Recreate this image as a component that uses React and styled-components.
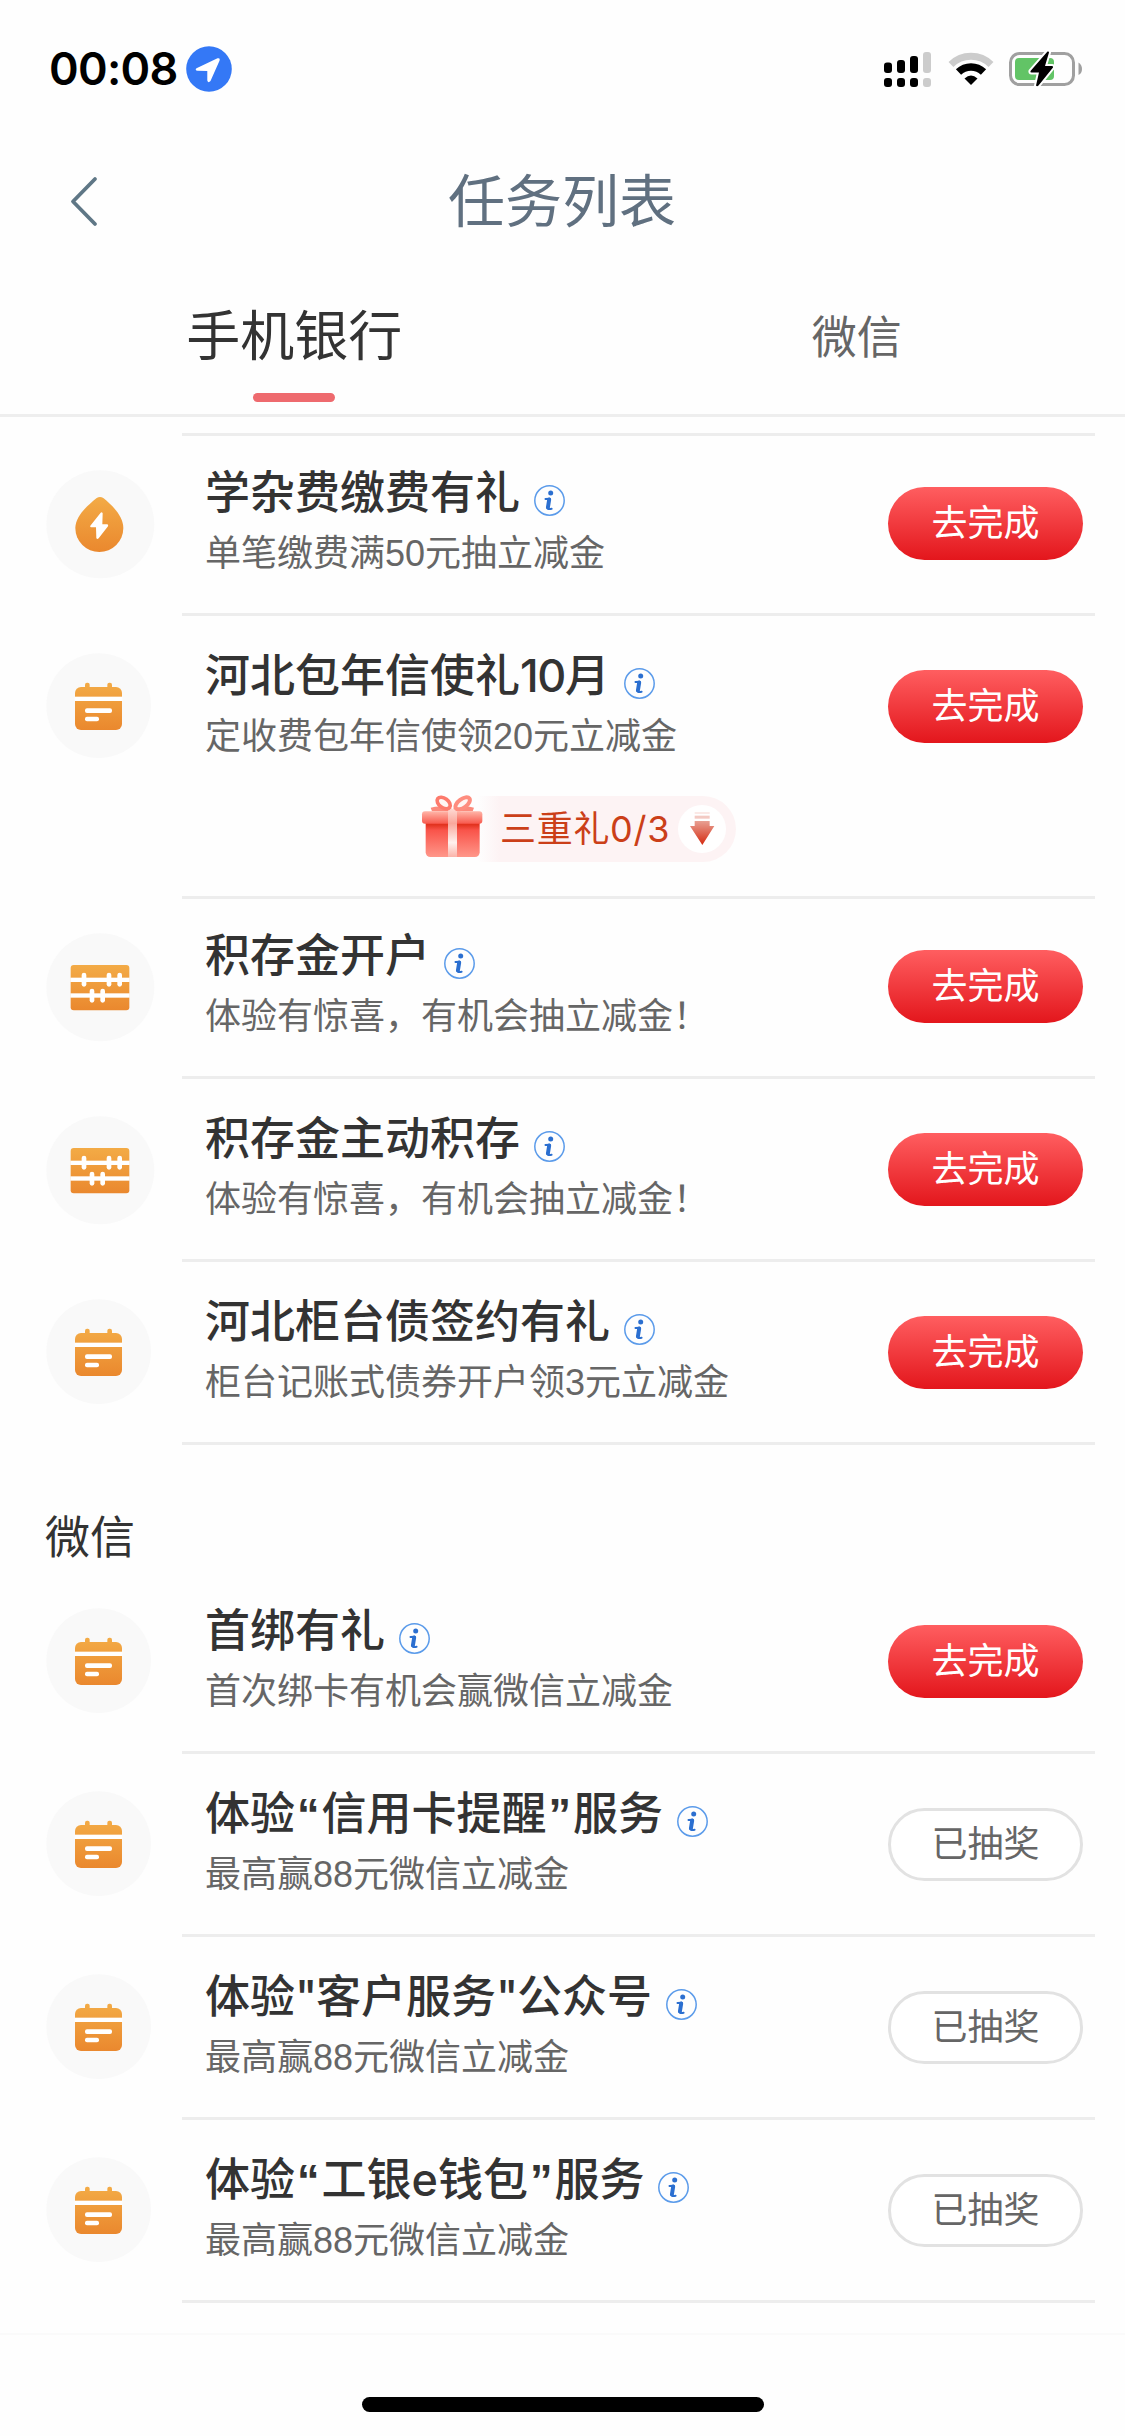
import React from "react";
import styled, { createGlobalStyle } from "styled-components";

const GlobalStyle = createGlobalStyle`
  * {
    box-sizing: border-box;
  }

  body {
    margin: 0;
    background: #fefefe;
    font-family: "Liberation Sans", "Noto Sans CJK SC", sans-serif;
  }
`;

const Page = styled.div`
  width: 1125px;
  height: 2436px;
  display: flex;
  flex-direction: column;
  background: #fefefe;
  overflow: hidden;
`;

const StatusBar = styled.div`
  height: 132px;
  flex: none;
  display: flex;
  justify-content: space-between;
  align-items: flex-start;
  padding: 46px 42px 0 49px;

  .left {
    display: flex;
    align-items: center;
    height: 46px;
  }

  .time {
    width: 137px;
    font-family: Inter, sans-serif;
    font-weight: 600;
    font-size: 45px;
    line-height: 46px;
    letter-spacing: -0.7px;
    color: #000;
    white-space: nowrap;
  }

  svg {
    display: block;
  }
`;

const NavBar = styled.div`
  height: 138px;
  flex: none;
  display: grid;
  grid-template-columns: 200px 1fr 200px;
  align-items: center;

  svg {
    margin-left: 67px;
  }

  h1 {
    margin: 0;
    padding: 1px 1px 0 0;
    text-align: center;
    font-weight: 400;
    font-size: 57px;
    line-height: 80px;
    color: #607080;
  }
`;

const Tabs = styled.div`
  height: 147px;
  flex: none;
  display: grid;
  grid-template-columns: 1fr 1fr;
  padding-left: 13px;
  margin-right: -13px;
  border-bottom: 3px solid #eeeeee;
`;

const Tab = styled.div`
  display: flex;
  flex-direction: column;
  align-items: center;
  font-size: ${(p) => (p.$active ? "54px" : "45px")};
  color: ${(p) => (p.$active ? "#333" : "#666")};
  line-height: 70px;
  padding-top: ${(p) => (p.$active ? "32px" : "34px")};

  &::after {
    content: "";
    display: ${(p) => (p.$active ? "block" : "none")};
    width: 82px;
    height: 9px;
    margin-top: 21px;
    border-radius: 5px;
    background: #ee6a6e;
  }
`;

const List = styled.div`
  padding-top: ${(p) => (p.$top ? "16px" : "0")};
`;

const Row = styled.div`
  display: grid;
  grid-template-columns: 137px 1fr;
  height: ${(p) => (p.$gift ? "280px" : "183px")};
  padding: 0 30px 0 45px;
`;

const IconCell = styled.div`
  padding: 37px 0 0 0.5px;

  svg {
    display: block;
  }
`;

const RowBody = styled.div`
  display: grid;
  grid-template-columns: 1fr 195px;
  grid-template-rows: ${(p) => (p.$first ? "177px" : "180px")} 1fr;
  padding: 0 12px 0 23px;
  border-top: ${(p) => (p.$first ? "3px solid #ededed" : "none")};
  border-bottom: ${(p) => (p.$line ? "3px solid #ededed" : "none")};
`;

const Text = styled.div`
  padding-top: ${(p) => (p.$first ? "27px" : "30px")};
`;

const Title = styled.div`
  display: flex;
  align-items: center;
  height: 60px;
  font-family: Inter, "Noto Sans CJK SC", sans-serif;
  font-weight: 500;
  font-size: 45px;
  line-height: 60px;
  color: #333;
  white-space: nowrap;

  svg {
    margin: 15px 0 0 14px;
  }
`;

const Quote = styled.span`
  display: inline-block;
  width: ${(p) => p.$w}px;
  text-align: center;
  font-family: ${(p) => (p.$curly ? '"Liberation Sans"' : "Inter")}, sans-serif;
  font-weight: ${(p) => (p.$curly ? 700 : 500)};
`;

const Digits = styled.span`
  letter-spacing: -1.5px;
`;

const Desc = styled.div`
  font-size: 36px;
  line-height: 54px;
  margin-top: 4px;
  color: #666;
  white-space: nowrap;
`;

const Button = styled.div`
  height: 73px;
  margin-top: ${(p) => (p.$first ? "51px" : "54px")};
  border-radius: 37px;
  display: flex;
  align-items: center;
  justify-content: center;
  font-size: 36px;
  line-height: 54px;
  color: ${(p) => (p.$done ? "#666" : "#fff")};
  background: ${(p) =>
    p.$done ? "#fff" : "linear-gradient(180deg, #ff5e60 0%, #e3161c 100%)"};
  border: ${(p) => (p.$done ? "3px solid #e2e2e2" : "none")};
`;

const GiftBar = styled.div`
  grid-column: 1 / -1;
  display: flex;
  align-items: center;
  width: 315px;
  height: 66px;
  margin-left: 216px;
  padding-right: 10px;
  border-radius: 33px;
  background: linear-gradient(90deg, #fdf3f400 18%, #fdf3f4 25%);
  color: #cb3f18;
  font-family: Inter, "Noto Sans CJK SC", sans-serif;
  font-weight: 400;
  font-size: 36px;
  line-height: 54px;

  svg {
    flex: none;
  }

  svg:first-child {
    margin-top: -5px;
  }

  .count {
    width: 178px;
    margin-left: 17px;
    letter-spacing: 0.7px;
    white-space: nowrap;
  }
`;

const SectionTitle = styled.div`
  height: 126px;
  padding: 61px 45px 0;
  font-size: 45px;
  line-height: 66px;
  color: #333;
`;

const BottomBar = styled.div`
  flex: 1;
  margin-top: 30px;
  border-top: 2px solid #fafafa;
  display: flex;
  justify-content: center;
  align-items: flex-end;
  padding-bottom: 24px;

  div {
    width: 402px;
    height: 15px;
    border-radius: 8px;
    background: #000;
  }
`;

const OrangeGradient = ({ id, y1, y2 }) => (
  <defs>
    <linearGradient id={id} gradientUnits="userSpaceOnUse" x1="0" y1={y1} x2="0" y2={y2}>
      <stop offset="0" stopColor="#f3ab46" />
      <stop offset="1" stopColor="#ea882e" />
    </linearGradient>
  </defs>
);

const DropIcon = () => (
  <svg width="109" height="109" viewBox="0 0 327 327">
    <OrangeGradient id="drop" y1="80" y2="246" />
    <circle cx="163" cy="163" r="162" fill="#f9f9f9" />
    <path
      d="M152 84 Q162 78 172 84 C197 104 232 138 232 174 A72 72 0 0 1 88 174 C88 138 127 104 152 84Z"
      fill="url(#drop)"
    />
    <path
      d="M164 128 L133 167 Q131 171 135 172 L150 172 L151 204 Q153 210 158 205 L186 169 Q188 164 184 163 L169 163 L170 130 Q168 125 164 128Z"
      fill="#fff"
    />
  </svg>
);

const CalendarIcon = () => (
  <svg width="106" height="106" viewBox="0 0 318 318">
    <OrangeGradient id="calendar" y1="89" y2="231" />
    <circle cx="158" cy="158" r="157" fill="#f9f9f9" />
    <rect x="117" y="89" width="14" height="30" rx="6" fill="url(#calendar)" />
    <rect x="184" y="89" width="14" height="30" rx="6" fill="url(#calendar)" />
    <rect x="87" y="102" width="141" height="129" rx="18" fill="url(#calendar)" />
    <rect x="86" y="131" width="143" height="13" fill="#fff" />
    <rect x="117" y="166" width="81" height="14" rx="6" fill="#fff" />
    <rect x="117" y="191" width="42" height="14" rx="6" fill="#fff" />
  </svg>
);

const AbacusIcon = () => (
  <svg width="109" height="109" viewBox="0 0 327 327">
    <OrangeGradient id="abacus" y1="96" y2="232" />
    <circle cx="163" cy="163" r="162" fill="#f9f9f9" />
    <rect x="74" y="96" width="176" height="136" rx="9" fill="url(#abacus)" />
    <g fill="#fff">
      <rect x="73" y="134" width="178" height="13" />
      <rect x="73" y="181" width="178" height="13" />
      {[107, 182, 214].map((x) => (
        <rect key={x} x={x} y="119" width="14" height="42" rx="7" />
      ))}
      {[131, 163].map((x) => (
        <rect key={x} x={x} y="167" width="14" height="42" rx="7" />
      ))}
    </g>
  </svg>
);

const InfoIcon = () => (
  <svg width="31" height="31" viewBox="0 0 31 31">
    <circle cx="15.5" cy="15.5" r="14.7" fill="none" stroke="#5b9bea" strokeWidth="1.5" />
    <circle cx="16.7" cy="8" r="2.5" fill="#2b6fd0" />
    <path
      d="M11.5 14 L15.6 13.7 L13.7 22.5 Q13.5 24.8 17.6 23.8"
      fill="none"
      stroke="#2b6fd0"
      strokeWidth="2"
      strokeLinecap="round"
      strokeLinejoin="round"
    />
    <path d="M15.2 14.5 L13.9 22.5" stroke="#2b6fd0" strokeWidth="4" strokeLinecap="round" />
  </svg>
);

const GiftIcon = () => (
  <svg width="62" height="63" viewBox="0 0 186 189">
    <defs>
      <linearGradient id="box" x1="0" y1="0" x2="0" y2="1">
        <stop offset="0" stopColor="#e2331f" />
        <stop offset="0.18" stopColor="#e2331f" />
        <stop offset="0.32" stopColor="#f9544a" />
        <stop offset="1" stopColor="#ff978a" />
      </linearGradient>
      <linearGradient id="lid" x1="0" y1="0" x2="0" y2="1">
        <stop offset="0" stopColor="#ffb5a8" />
        <stop offset="1" stopColor="#f8594d" />
      </linearGradient>
      <linearGradient id="ribbon" x1="0" y1="0" x2="0" y2="1">
        <stop offset="0" stopColor="#ffd9d2" />
        <stop offset="0.3" stopColor="#f9a79c" />
        <stop offset="0.7" stopColor="#fff1ee" />
        <stop offset="1" stopColor="#fbb3a9" />
      </linearGradient>
    </defs>
    <rect x="14" y="68" width="162" height="118" rx="14" fill="url(#box)" />
    <path d="M29 38 Q62 30 94 42 Q128 30 159 38 L155 49 L33 49Z" fill="#fb8a7c" />
    <rect x="3" y="49" width="181" height="37" rx="9" fill="url(#lid)" />
    <rect x="81" y="42" width="27" height="144" fill="url(#ribbon)" />
    <ellipse cx="68" cy="24" rx="22" ry="14" transform="rotate(36 68 24)" fill="#fff5f3" stroke="#fd7a6c" strokeWidth="11" />
    <ellipse cx="125" cy="25" rx="25" ry="13" transform="rotate(-36 125 25)" fill="#fff5f3" stroke="#fe8d7f" strokeWidth="12" />
  </svg>
);

const ArrowIcon = () => (
  <svg width="48" height="48" viewBox="0 0 144 144">
    <defs>
      <linearGradient id="arrow" x1="0" y1="0" x2="0" y2="1">
        <stop offset="0" stopColor="#e8a093" />
        <stop offset="1" stopColor="#d52a10" />
      </linearGradient>
    </defs>
    <circle cx="72" cy="72" r="72" fill="#fff" />
    <rect x="50" y="21" width="45" height="6" fill="#fbe9e6" />
    <rect x="50" y="32" width="45" height="9" fill="#f3cac3" />
    <path d="M50 48 H95 V63 H109 L73 120 L36 63 H50Z" fill="url(#arrow)" />
  </svg>
);

const StatusIcons = () => (
  <svg width="200" height="46" viewBox="883 46 200 46">
    <g fill="#000">
      <rect x="884" y="62.5" width="8" height="10.5" rx="3" />
      <rect x="897" y="60" width="8" height="13" rx="3" />
      <rect x="910" y="56" width="8" height="17" rx="3" />
      <rect x="884" y="78" width="8" height="9" rx="3" />
      <rect x="897" y="78" width="8" height="9" rx="3" />
      <rect x="910" y="78" width="8" height="9" rx="3" />
    </g>
    <rect x="923" y="52" width="8" height="21" rx="3" fill="#ccc" />
    <rect x="923" y="78" width="8" height="9" rx="3" fill="#ccc" />
    <path d="M951 64.5 A28.5 28.5 0 0 1 991 64.5" fill="none" stroke="#ccc" strokeWidth="7" />
    <path d="M958.5 72 A18 18 0 0 1 983.5 72" fill="none" stroke="#000" strokeWidth="7.5" />
    <path d="M964.5 78.5 Q971 72.5 977.5 78.5 L971 85Z" fill="#000" />
    <rect x="1010.5" y="53.5" width="63" height="31" rx="9" fill="none" stroke="#a0a0a0" strokeWidth="3" />
    <path d="M1078.5 62.5 Q1082 64.5 1082 69 Q1082 73.5 1078.5 75Z" fill="#a0a0a0" />
    <rect x="1015" y="58" width="39" height="22" rx="4" fill="#62c466" />
    <path
      d="M1047.5 51.5 L1030.5 71 Q1030 72.5 1031.5 72.5 H1039 L1036 85.5 Q1037 87 1038.5 85.5 L1053 67.5 Q1053.5 66 1052 66 H1045 L1049 52.5 Q1049 51 1047.5 51.5Z"
      fill="#000"
      stroke="#fff"
      strokeWidth="4"
      paintOrder="stroke"
    />
  </svg>
);

const icons = { drop: DropIcon, calendar: CalendarIcon, abacus: AbacusIcon };

const bankTasks = [
  { icon: "drop", title: "学杂费缴费有礼", desc: "单笔缴费满50元抽立减金", first: true },
  { icon: "calendar", title: "河北包年信使礼10月", desc: "定收费包年信使领20元立减金", gift: "三重礼0/3" },
  { icon: "abacus", title: "积存金开户", desc: "体验有惊喜，有机会抽立减金！", first: true },
  { icon: "abacus", title: "积存金主动积存", desc: "体验有惊喜，有机会抽立减金！" },
  { icon: "calendar", title: "河北柜台债签约有礼", desc: "柜台记账式债券开户领3元立减金" },
];

const wechatTasks = [
  { icon: "calendar", title: "首绑有礼", desc: "首次绑卡有机会赢微信立减金" },
  { icon: "calendar", title: "体验“信用卡提醒”服务", desc: "最高赢88元微信立减金", done: true },
  { icon: "calendar", title: '体验"客户服务"公众号', desc: "最高赢88元微信立减金", done: true },
  { icon: "calendar", title: "体验“工银e钱包”服务", desc: "最高赢88元微信立减金", done: true },
];

// quotes are narrower than a full-width character
const renderTitle = (title) =>
  title.split(/([“”"]|\d+)/).map((part, i) => {
    if (part === '"') return <Quote key={i} $w={21}>{part}</Quote>;
    if (part === "“" || part === "”") return <Quote key={i} $w={26.5} $curly>{part}</Quote>;
    if (/^\d+$/.test(part)) return <Digits key={i}>{part}</Digits>;
    return part;
  });

const Task = ({ task, line }) => {
  const Icon = icons[task.icon];
  return (
    <Row $gift={!!task.gift}>
      <IconCell>
        <Icon />
      </IconCell>
      <RowBody $first={task.first} $line={line}>
        <Text $first={task.first}>
          <Title>
            <span>{renderTitle(task.title)}</span>
            <InfoIcon />
          </Title>
          <Desc>{task.desc}</Desc>
        </Text>
        <Button $first={task.first} $done={task.done}>
          {task.done ? "已抽奖" : "去完成"}
        </Button>
        {task.gift && (
          <GiftBar>
            <GiftIcon />
            <span className="count">{task.gift}</span>
            <ArrowIcon />
          </GiftBar>
        )}
      </RowBody>
    </Row>
  );
};

const App = () => {
  return (
    <Page>
      <GlobalStyle />
      <StatusBar>
        <div className="left">
          <span className="time">00:08</span>
          <svg width="46" height="46" viewBox="0 0 46 46">
            <circle cx="23" cy="23" r="22.8" fill="#3478f6" />
            <path
              d="M10.5 22.2 L31.5 12.3 Q34.5 11.6 33.6 14.5 L24.5 35 Q22.2 37.5 21.3 34.5 L21.3 25 L11.5 24.8 Q8.5 24 10.5 22.2Z"
              fill="#fff"
            />
          </svg>
        </div>
        <StatusIcons />
      </StatusBar>

      <NavBar>
        <svg width="34" height="54" viewBox="0 0 34 54">
          <path
            d="M28 5 L6 27.5 L28 50"
            fill="none"
            stroke="#5f7786"
            strokeWidth="3.8"
            strokeLinecap="round"
            strokeLinejoin="round"
          />
        </svg>
        <h1>任务列表</h1>
      </NavBar>

      <Tabs>
        <Tab $active>手机银行</Tab>
        <Tab>微信</Tab>
      </Tabs>

      <List $top>
        {bankTasks.map((task, i) => (
          <Task key={i} task={task} line={i !== 1} />
        ))}
      </List>

      <SectionTitle>微信</SectionTitle>
      <List>
        {wechatTasks.map((task, i) => (
          <Task key={i} task={task} line />
        ))}
      </List>

      <BottomBar>
        <div />
      </BottomBar>
    </Page>
  );
};

export default App;
